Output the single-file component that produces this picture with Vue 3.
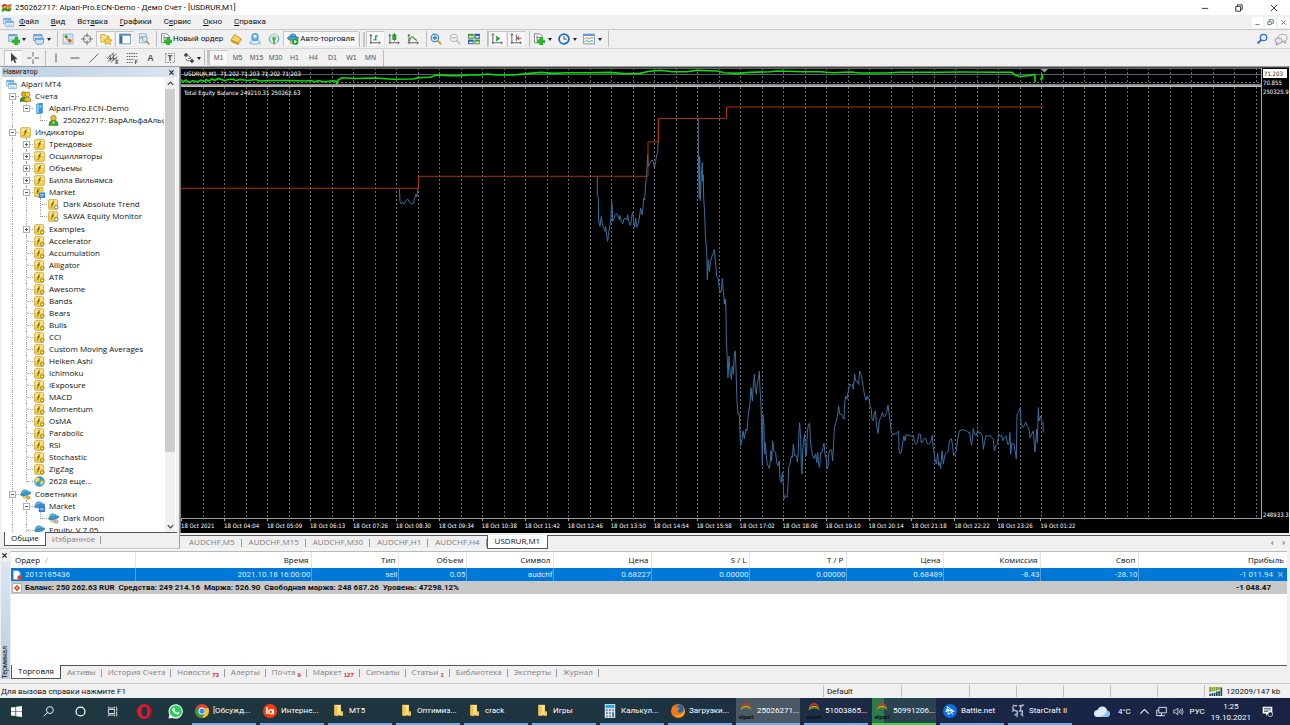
<script setup>
const icons = {
  logo: '<path d="M1 5q4-4 7-1t7-2v3q-4 3-7 1T1 8z" fill="#e23b2e"/><path d="M1 8q4-4 7-2t7-1v3q-4 3-7 1t-7 1z" fill="#f3b51d"/><path d="M1 11q4-4 7-2t7-1v4q-4 3-7 1t-7 2z" fill="#3d9a3a"/><path d="M4 4l-1 10M8 4l-1 9M12 3l-1 10" stroke="#7c2d12" stroke-width=".6"/>',
  windows: '<path d="M1 2h10v8H1z" fill="#eaf5fd" stroke="#5b9bd0"/><path d="M1 2h10v2.500H1z" fill="#63a9de"/><path d="M4 6h11v8H4z" fill="#fff" stroke="#5b9bd0"/><path d="M4 6h11v2.500H4z" fill="#63a9de"/><path d="M6 10.500h7M6 12.300h7" stroke="#8fc0e5"/>',
  newchart: '<path d="M1 2h11v9H1z" fill="#e9f3fb" stroke="#5486b5"/><path d="M1 2h11v2.500H1z" fill="#6fa6d4"/><path d="M3 9l2-2 2 2" stroke="#5486b5" fill="none"/><path d="M9 6h4v3.500h3.500v3.500H13V16H9v-3H5.500V9.500H9z" fill="#1fc41f" stroke="#0b7a0b" stroke-width=".6"/>',
  profiles: '<path d="M1 2h11v8H1z" fill="#eaf3fb" stroke="#4f86bb"/><path d="M1 2h11v2.500H1z" fill="#6fa6d4"/><path d="M3 7h11v6l-2 2H5l-2-2z" fill="#c9e0f3" stroke="#4f86bb"/><path d="M3 7h11v2H3z" fill="#5d9ad0"/>',
  watch: '<path d="M1.500 1.500h13v13h-13z" fill="#eef7fd" stroke="#69a3cf"/><path d="M9 4h4M9 6h4M3 11h4M3 13h4" stroke="#9cc7e6"/><circle cx="5.500" cy="5" r="2.200" fill="#22a53a"/><path d="M5 8l3-2 3 3-3 2z" fill="#f0a070"/><circle cx="10.500" cy="10.500" r="2.400" fill="#ea4a24"/>',
  cross: '<circle cx="8" cy="8" r="5" fill="none" stroke="#6b6b6b" stroke-width="1.200"/><path d="M8 0v6M8 10v6M0 8h6M10 8h6" stroke="#6b6b6b" stroke-width="1.200"/>',
  favs: '<path d="M1 2h5l1.500 2H12v8H1z" fill="#fbe28b" stroke="#c4922a"/><path d="M10.500 5.500l1.700 3.300 3.800.5-2.800 2.500.8 3.700-3.500-1.800L7 15.500l.7-3.700L5 9.300l3.700-.5z" fill="#ffd638" stroke="#b58412" stroke-width=".8"/>',
  nav: '<path d="M.5 1.500h15v13H.5z" fill="#fff" stroke="#3f7ec0"/><path d="M.5 1.500h15v2H.5z" fill="#3f7ec0"/><path d="M1 3.500h3.500V14H1z" fill="#2f6fb6"/>',
  tester: '<path d="M2 1h9v12H2z" fill="#e7f1fa" stroke="#78a3c8"/><path d="M3 8l2-4 2 5 2-5" stroke="#4b79a2" fill="none"/><circle cx="9" cy="8" r="3.500" fill="#d8ebf9" fill-opacity=".8" stroke="#7d97ab"/><path d="M11.500 11l3.500 4" stroke="#b98d2d" stroke-width="2"/>',
  order: '<path d="M2 1h7l3 3v9H2z" fill="#fff" stroke="#666"/><path d="M4 4h3M4 6h6M4 8h4" stroke="#777"/><path d="M9 6h4v3.500h3.500v3.500H13V16H9v-3H5.500V9.500H9z" fill="#1fc41f" stroke="#0b7a0b" stroke-width=".6"/>',
  book: '<path d="M6 2l9 6-4 5.500-9.500-4z" fill="#fad25e" stroke="#b37d12"/><path d="M1.500 9.500l9.500 4v2L2 11.700z" fill="#e2a22a" stroke="#a8700c" stroke-width=".6"/><path d="M11 13.500l4-5.500v2l-4 5.500z" fill="#fff3c5" stroke="#a8700c" stroke-width=".5"/>',
  person: '<rect x="4" y="1" width="8" height="9" rx="2.500" fill="#5cb3ee" stroke="#2b74b4"/><rect x="6" y="2.500" width="4" height="4" fill="#d8effc"/><path d="M1 14q0-4 4-4h6q4 0 4 4-7 2-14 0z" fill="#dff0fb" stroke="#5e97c3"/>',
  signal: '<circle cx="8" cy="8" r="6.500" fill="#dfe9e4" stroke="#9cb8ae"/><path d="M3.500 12a6 6 0 0 1 0-8M12.500 12a6 6 0 0 0 0-8" fill="none" stroke="#6ab0dc" stroke-width="1.400"/><circle cx="8" cy="7" r="2.500" fill="#5fb763"/><path d="M8 8v7" stroke="#379c3f" stroke-width="2"/>',
  auto: '<path d="M4 9h5v4q-4 3-5-1z" fill="#f6cf65" stroke="#b5872b"/><path d="M4 6q0-5 4-5t4 5z" fill="#66b7e6" stroke="#256c9e"/><ellipse cx="8" cy="7" rx="7.500" ry="2.600" fill="#4c9ed4" stroke="#256c9e"/><circle cx="11" cy="11.500" r="4.300" fill="#16a52b"/><path d="M9.700 9l3.800 2.500-3.800 2.500z" fill="#fff"/>',
  bars: '<path d="M2.500 2v12.500M1 13h14M1 4l1.500-2L4 4M13 11.500l2 1.500-2 1.500" fill="none" stroke="#555" stroke-width="1.200"/><path d="M9 3v7M9 4h3M6 9h3" stroke="#18952b" stroke-width="1.600"/>',
  candle: '<path d="M2.500 2v12.500M1 13h14M1 4l1.500-2L4 4M13 11.500l2 1.500-2 1.500" fill="none" stroke="#555" stroke-width="1.200"/><path d="M8.500 0v11" stroke="#0d7d1d"/><rect x="6.500" y="2.500" width="4" height="6" fill="#25b33c" stroke="#0d7d1d"/>',
  line: '<path d="M2.500 2v12.500M1 13h14M1 4l1.500-2L4 4M13 11.500l2 1.500-2 1.500" fill="none" stroke="#555" stroke-width="1.200"/><path d="M3 11q3-9 6-4l4 3" fill="none" stroke="#18952b" stroke-width="1.400"/>',
  zoomin: '<path d="M10 10l5 5" stroke="#d8a628" stroke-width="3"/><circle cx="6.500" cy="6.500" r="5" fill="#d6ecfa" stroke="#3b86c4" stroke-width="1.500"/><path d="M3.500 6.500h6M6.500 3.500v6" stroke="#1f6fb4" stroke-width="1.500"/>',
  zoomout: '<path d="M10 10l5 5" stroke="#c8c8c8" stroke-width="2.500"/><circle cx="6.500" cy="6.500" r="5" fill="#f3f3f3" stroke="#b4b4b4" stroke-width="1.300"/><path d="M3.500 6.500h6" stroke="#a4a4a4" stroke-width="1.400"/>',
  tile: '<path d="M0 1h7.500v6.500H0zM8.500 8.500H16V15H8.500z" fill="#4f9f2d"/><path d="M8.500 1H16v6.500H8.500zM0 8.500h7.500V15H0z" fill="#2c62b0"/><path d="M1.500 4h5v2h-5zM10 4h5v2h-5zM1.500 11.500h5v2h-5zM10 11.500h5v2h-5z" fill="#e9f3e6"/>',
  scroll: '<path d="M2.500 1v13.500M1 13h14M1 3l1.500-2L4 3M13 11.500l2 1.500-2 1.500" fill="none" stroke="#555" stroke-width="1.200"/><path d="M7 4l5 3.500L7 11z" fill="#25b33c" stroke="#0d7d1d" stroke-width=".5"/>',
  shift: '<path d="M2.500 1v13.500M1 13h14M1 3l1.500-2L4 3M13 11.500l2 1.500-2 1.500" fill="none" stroke="#555" stroke-width="1.200"/><path d="M8.500 2v9" stroke="#3474b2" stroke-width="1.300"/><path d="M15 7H9.500M12 4.500L9.500 7 12 9.500" stroke="#d44a1c" stroke-width="1.400" fill="none"/>',
  clock: '<circle cx="8" cy="8" r="6.500" fill="#f2f8fd" stroke="#1f69b8" stroke-width="2.400"/><path d="M8 4v4.200h3.500" stroke="#333" fill="none" stroke-width="1.200"/>',
  tmpl: '<path d="M.5 1.500h15v13H.5z" fill="#f4fafe" stroke="#4d86b8"/><path d="M.5 1.500h15V4H.5z" fill="#5d9ad0"/><path d="M2 8l3-2 3 2 3-2 3 1" stroke="#c7502a" fill="none"/><path d="M2 12l3-2 3 2 3-2 3 1" stroke="#2f9c2f" fill="none"/>',
  pointer: '<path d="M4 1v12l3-2.600 2 4.600 2-1-2-4.300h4z" fill="#444"/>',
  plus: '<path d="M8 0v6M8 10v6M0 8h6M10 8h6" stroke="#555" stroke-width="1.200"/>',
  vline: '<path d="M8 2v12" stroke="#555" stroke-width="1.300"/>',
  hline: '<path d="M2 8h12" stroke="#555" stroke-width="1.300"/>',
  trend: '<path d="M2 14L14 2" stroke="#555" stroke-width="1.200"/>',
  channel: '<path d="M0 9L9 1M1 13L13 2M5 14l9-8M4 4l1 8M8 2l1 9M2 9h11" stroke="#444" fill="none"/><path d="M15.500 11H12v5h3.500M12 13.500h3" stroke="#333" fill="none"/>',
  fibo: '<path d="M1 2h14M1 6h14M1 10h10M1 14h9" stroke="#555" stroke-width="1.200" stroke-dasharray="2 1"/><path d="M15.500 11H12.500v5M12.500 13.500h2.500" stroke="#333" fill="none"/>',
  frame: '<path d="M2 2h12v12H2z" stroke="#666" fill="none" stroke-dasharray="2 1.500"/><path d="M5 5h6M8 5v7" stroke="#333" stroke-width="1.500"/>',
  arrows: '<path d="M4 1l3 3-3 3-3-3zM12 9l3 3-3 3-3-3z" fill="#444"/><path d="M7 5l4 3-4 1M4 9l2 3 3-1" stroke="#444" fill="none"/>',
  mag: '<circle cx="10" cy="6" r="4.300" fill="#e6effb" stroke="#3b6fd0" stroke-width="1.700"/><path d="M7 9l-5 5" stroke="#3b6fd0" stroke-width="2.400"/>',
  chat: '<ellipse cx="10" cy="6" rx="5.500" ry="4.300" fill="#f4f4f4" stroke="#9a9a9a"/><ellipse cx="5" cy="9.500" rx="4.500" ry="3.500" fill="#e6e6e6" stroke="#8d8d8d"/><path d="M3 12l-1 3 4-2M13 9.500l1 3-4-2" fill="#e6e6e6" stroke="#8d8d8d"/>',
  people: '<circle cx="5.500" cy="4.500" r="3.500" fill="#e2b117" stroke="#8c6a07"/><path d="M0 15q0-6 5.500-6T11 15z" fill="#3a9c1c" stroke="#226a0d"/><circle cx="11" cy="5" r="3.500" fill="#f4c93d" stroke="#8c6a07"/><path d="M6 15q0-6 5-6t5 6z" fill="#f0c02a" stroke="#8c6a07"/>',
  server: '<path d="M4 1.500l8-1v14l-8 1z" fill="#2f9be8" stroke="#1a6fb5"/><path d="M4 1.500l3 1V15l-3-.5z" fill="#8ccaf5"/><path d="M8 4h3M8 6h3" stroke="#d8effc"/>',
  user: '<path d="M1.500 15q0-7.500 6.500-7.500T14.500 15z" fill="#38ad22" stroke="#1f7510"/><circle cx="8" cy="4.500" r="4" fill="#f0c02a" stroke="#8c6a07"/><path d="M8 9l-2 3h4z" fill="#fff"/>',
  f: '<rect x="1" y="1" width="14" height="14" rx="1.500" fill="#f8d44f" stroke="#bd9016"/><path d="M2 2h12v5H2z" fill="#fbe58e"/><path d="M10.500 4Q8.500 3 8 6l-1 5q-.4 1.500-2 1.300M6 7h4" stroke="#5a420a" stroke-width="1.200" fill="none"/>',
  fg: '<rect x="1" y="1" width="13" height="14" rx="1.500" fill="#f8d44f" stroke="#bd9016"/><path d="M2 2h11v5H2z" fill="#fbe58e"/><path d="M9 4Q7 3 6.500 6l-1 5q-.4 1-1.500 1M5 7h3.500" stroke="#5a420a" stroke-width="1.200" fill="none"/><circle cx="12" cy="12" r="2.600" fill="#f7c21f" stroke="#9a7210" stroke-width="1.200"/><circle cx="12" cy="12" r="1" fill="#fff"/>',
  fc: '<rect x="1" y="1" width="13" height="14" rx="1.500" fill="#f8d44f" stroke="#bd9016"/><path d="M2 2h11v5H2z" fill="#fbe58e"/><path d="M9 4Q7 3 6.500 6l-1 5q-.4 1-1.500 1M5 7h3.500" stroke="#5a420a" stroke-width="1.200" fill="none"/><circle cx="12" cy="12" r="2.600" fill="#ddd" stroke="#777" stroke-width="1.200"/><circle cx="12" cy="12" r="1" fill="#fff"/>',
  fm: '<rect x="0" y="0" width="13" height="14" rx="1.500" fill="#f8d44f" stroke="#bd9016"/><path d="M8 3Q6 2 5.500 5l-1 5M4 6h3.500" stroke="#5a420a" stroke-width="1.200" fill="none"/><rect x="7" y="8" width="9" height="8" fill="#2f87dc"/><path d="M9.500 8q2-3 4 0M9 11h5M9 13h5" stroke="#d8effc" fill="none"/>',
  globe: '<circle cx="8" cy="8" r="7" fill="#3aa0e6" stroke="#2a78b5"/><path d="M3 3q4-2 5 1t-2 4-3 3q-3-4 0-8zM10 7q4-1 4 1-1 5-4 5-2-3 0-6z" fill="#f2dc3a"/>',
  hat: '<path d="M4 9h5v4q-3 2-5-1z" fill="#f6cf65" stroke="#b5872b" stroke-width=".6"/><path d="M2 7Q2 1 7 1t6 5z" fill="#56b0e4" stroke="#2a7bb0" stroke-width=".7"/><path d="M0 8q6-4 15-4l1 2q-5 4-13 4z" fill="#3d97cf" stroke="#2a6f9f" stroke-width=".7"/><circle cx="12" cy="12.500" r="2.500" fill="#f7c21f" stroke="#9a7210"/>',
  hatm: '<path d="M2 7Q2 1 7 1t6 5z" fill="#56b0e4" stroke="#2a7bb0" stroke-width=".7"/><path d="M0 8q6-4 15-4l1 2q-5 4-13 4z" fill="#3d97cf" stroke="#2a6f9f" stroke-width=".7"/><rect x="7" y="7.500" width="9" height="8.500" fill="#2f77dc"/><path d="M9 11h5M9 13h5" stroke="#d8effc"/>',
  hatg: '<path d="M4 9h5v4q-3 2-5-1z" fill="#f6cf65" stroke="#b5872b" stroke-width=".6"/><path d="M2 7Q2 1 7 1t6 5z" fill="#56b0e4" stroke="#2a7bb0" stroke-width=".7"/><path d="M0 8q6-4 15-4l1 2q-5 4-13 4z" fill="#3d97cf" stroke="#2a6f9f" stroke-width=".7"/><circle cx="12" cy="12.500" r="2.500" fill="#ddd" stroke="#666"/>',
  sell: '<path d="M2 1h8l3 3v11H2z" fill="#fff" stroke="#999"/><circle cx="12" cy="12" r="3.500" fill="#e0431a"/>',
  sum: '<rect x="1" y="1" width="14" height="14" rx="1" fill="#fff" stroke="#8a8a8a"/><path d="M8 3l5 5-5 5-5-5z" fill="#cf3a12"/><path d="M8 6v4M6 8h4" stroke="#fff"/>',
  start: '<path d="M0 2.200l6.500-.9v6.200H0zM7.500 1.100L16 0v7.500H7.500zM0 8.500h6.500v6.200L0 13.800zM7.500 8.500H16V16l-8.500-1.100z" fill="#fff"/>',
  search: '<circle cx="10" cy="6" r="5" fill="none" stroke="#fff" stroke-width="1.300"/><path d="M6.500 9.500L1 15" stroke="#fff" stroke-width="1.300"/>',
  ring: '<circle cx="8" cy="8" r="6.500" fill="none" stroke="#fff" stroke-width="1.800"/>',
  taskview: '<path d="M2 5h9v6H2zM2 1v2h9V1M2 15v-2h9v2M14 1v3M14 8v7" fill="none" stroke="#fff" stroke-width="1.200"/><path d="M13 4.500h2v2h-2z" fill="#fff"/>',
  opera: '<path fill-rule="evenodd" d="M8 0a8 8 0 1 0 0 16A8 8 0 1 0 8 0zm0 2.300c2 0 3.300 2.400 3.300 5.700S10 13.700 8 13.700 4.700 11.300 4.700 8 6 2.300 8 2.300z" fill="#e3192c"/><path d="M8 0a8 8 0 0 1 0 16c4-1 6-4 6-8s-2-7-6-8z" fill="#a80d1e"/>',
  whatsapp: '<path d="M.5 15.500l1-4A7.600 7.600 0 1 1 5 14.800z" fill="#fff"/><circle cx="8.300" cy="7.700" r="6.500" fill="#25d05a"/><path d="M5.500 4q1.500-.5 2 1.800L7 7q.8 1.800 2.300 2.200l1-1q2 .6 1.900 1.300-.4 2-2.500 1.800Q5.600 10 4.600 6.500q0-1.800.9-2.500z" fill="#fff"/>',
  chrome: '<circle cx="8" cy="8" r="8" fill="#e2412f"/><path d="M1.100 4L8 16A8 8 0 0 1 1.100 4z" fill="#2f9c48"/><path d="M16 8a8 8 0 0 1-8 8l4-7V4.500h3.200A8 8 0 0 1 16 8z" fill="#fbc316"/><path d="M1.100 4l3.500 6L8 16l3.500-6z" fill="#2f9c48"/><circle cx="8" cy="8" r="4" fill="#fff"/><circle cx="8" cy="8" r="3" fill="#4285f4"/>',
  la: '<circle cx="8" cy="8" r="8" fill="#fa3c0a"/><path d="M4.500 3.500v8" stroke="#fff" stroke-width="1.800"/><circle cx="9" cy="8.800" r="2.200" fill="none" stroke="#fff" stroke-width="1.700"/><path d="M11.700 6v5.700" stroke="#fff" stroke-width="1.600"/>',
  folder: '<path d="M3 1h8v13H3z" fill="#ffe28a"/><path d="M10 9h3.500v5.500H10z" fill="#f6cb58"/><path d="M3 1l4 2.500V15l-4-1z" fill="#f3c44b"/>',
  calc: '<path d="M2 0h12v16H2z" fill="#d9e4ec"/><path d="M3 1h10v3.500H3z" fill="#2aa8e0"/><path d="M3.500 6h2v2h-2zM7 6h2v2H7zM10.500 6h2v2h-2zM3.500 9.500h2v2h-2zM7 9.500h2v2H7zM3.500 13h2v2h-2zM7 13h2v2H7z" fill="#607c90"/><path d="M10.500 9.500h2V15h-2z" fill="#2879b0"/>',
  firefox: '<circle cx="8" cy="8" r="8" fill="#f27a1a"/><circle cx="9" cy="6.500" r="5.500" fill="#1d66b8"/><path d="M1 3q2 1 4 0Q7 1.500 9 2 7 3 7.500 4.500l3 .5-3 2.500q0 3 3 2.500 2-.5 3.500-2-1 5-6 5-6-1-7-10z" fill="#f27a1a"/><path d="M13.500 3q3 4 0 8-4 4-9 1 4 5 9 1.500Q18 9 13.500 3z" fill="#fcc51f"/>',
  alpari: '<path d="M0 8Q2 0 8 0t8 8l-1-1Q13 3 8 3T1 8z" fill="#c43a24"/><path d="M0 10q2-6 8-6t8 6l-1-1q-3-3-7-3T1 10z" fill="#d9a420"/><path d="M0 11q2-5 8-5t8 5q-4-3-8-3t-8 3z" fill="#3e8c30"/>',
  bnet: '<circle cx="8" cy="8" r="8" fill="#0b6fe8"/><path d="M5 3l7 5-6 4zM4 9q-1-4 2-3 4 2 5 6M3 8.500q6-3 10 0" fill="none" stroke="#fff" stroke-width="1.100"/>',
  sc: '<path d="M7 2Q2 1 2 4t4 4-2 5M9 2h5M11 2v5M9 8h4v4M7 10v5M1 8h2M14 14l-3-3" fill="none" stroke="#a9bdd0" stroke-width="1.500"/><path d="M2 1l3 1M12 1h3" stroke="#e3c56a"/>',
  cloud: '<path d="M3.500 13a3.500 3.500 0 0 1 0-7Q5 2 9 2.500q3.500.5 4 4a3.300 3.300 0 0 1 0 6.500z" fill="#d9ecfa"/><path d="M5 13q6-1 8-6.500a3.300 3.300 0 0 1 0 6.500z" fill="#8cc4ee"/>',
  up: '<path d="M2 11l6-6 6 6" fill="none" stroke="#fff" stroke-width="1.600"/>',
  net: '<path d="M4 2h11v8H4zM1 6h3M1 6v8h7v-4M5 14h8" fill="none" stroke="#fff" stroke-width="1.200"/>',
  sound: '<path d="M1 6h3l3-3v10l-3-3H1z" fill="none" stroke="#fff"/><path d="M9 6q1 2 0 4M11 4.500q2 3.500 0 7M13 3q3 5 0 10" fill="none" stroke="#fff"/>',
  notify: '<path d="M1 1h14v10H9l-3 3v-3H1z" fill="#fff"/><path d="M3 3.500h10M3 5.800h10M3 8h6" stroke="#1d2b48"/><circle cx="12" cy="12" r="3.500" fill="#1d2b48" stroke="#fff"/>',
  traffic: '<path d="M0 0h3v9H0zM4 0h3v8H4zM8 0h3v7H8zM12 0h3v6h-3zM16 0h3v5h-3zM20 0h3v4h-3z" fill="#7c9a2a"/><path d="M0 12h3v4H0zM4 11h3v5H4zM8 10h3v6H8zM12 8h3v8h-3zM16 7h3v9h-3zM20 2h3v14h-3z" fill="#1c4c5c"/>',
}

const menu = [['', 'Ф', 'айл'], ['', 'В', 'ид'], ['Вст', 'а', 'вка'], ['', 'Г', 'рафики'], ['С', 'е', 'рвис'], ['', 'О', 'кно'], ['', 'С', 'правка']]

const tools = [
  { i: 'newchart', t: 'Новый график', drop: 1 }, { i: 'profiles', t: 'Профили', drop: 1 }, { sep: 1 },
  { i: 'watch', t: 'Обзор рынка' }, { i: 'cross', t: 'Окно данных' }, { i: 'favs', t: 'Избранное', on: 1 }, { i: 'nav', t: 'Навигатор', on: 1 }, { i: 'tester', t: 'Тестер' }, { sep: 1 },
  { i: 'order', label: 'Новый ордер' }, { i: 'book', t: 'Редактор' }, { i: 'person', t: 'Сообщество' }, { i: 'signal', t: 'Сигналы' },
  { i: 'auto', label: 'Авто-торговля', on: 1 }, { grip: 1 },
  { i: 'bars', t: 'Бары', on: 1 }, { i: 'candle', t: 'Свечи' }, { i: 'line', t: 'Линия' }, { sep: 1 },
  { i: 'zoomin', t: 'Увеличить' }, { i: 'zoomout', t: 'Уменьшить' }, { i: 'tile', t: 'Мозаика' }, { sep: 1 },
  { i: 'scroll', t: 'Автопрокрутка', on: 1 }, { i: 'shift', t: 'Сдвиг', on: 1 }, { sep: 1 },
  { i: 'order', t: 'Индикаторы', drop: 1 }, { i: 'clock', t: 'Периоды', drop: 1 }, { i: 'tmpl', t: 'Шаблоны', drop: 1 }, { sep: 1 },
]
const drawTools = [
  { i: 'pointer', t: 'Курсор', on: 1 }, { i: 'plus', t: 'Перекрестие' }, { sep: 1 }, { i: 'vline', t: 'Вертикаль' }, { i: 'hline', t: 'Горизонталь' },
  { i: 'trend', t: 'Тренд' }, { i: 'channel', t: 'Канал' }, { i: 'fibo', t: 'Фибоначчи' }, { tf: 'A' }, { i: 'frame', t: 'Метка' }, { i: 'arrows', t: 'Стрелки', drop: 1 },
  { grip: 1 },
  ...['M1', 'M5', 'M15', 'M30', 'H1', 'H4', 'D1', 'W1', 'MN'].map((tf, n) => ({ tf, on: n === 0 })), { sep: 1 },
]

const leaf = (n) => ({ d: 2, i: 'fg', n })
const tree = [
  { d: 0, i: 'windows', n: 'Alpari MT4' },
  { d: 1, i: 'people', n: 'Счета', b: '-' },
  { d: 2, i: 'server', n: 'Alpari-Pro.ECN-Demo', b: '-', last: 1 },
  { d: 3, i: 'user', n: '250262717: ВарАльфаАльфа', last: 1, gap: 1 },
  { d: 1, i: 'f', n: 'Индикаторы', b: '-' },
  { d: 2, i: 'f', n: 'Трендовые', b: '+' }, { d: 2, i: 'f', n: 'Осцилляторы', b: '+' }, { d: 2, i: 'f', n: 'Объемы', b: '+' }, { d: 2, i: 'f', n: 'Билла Вильямса', b: '+' },
  { d: 2, i: 'fm', n: 'Market', b: '-' },
  { d: 3, i: 'fc', n: 'Dark Absolute Trend' }, { d: 3, i: 'fc', n: 'SAWA Equity Monitor', last: 1 },
  { d: 2, i: 'fg', n: 'Examples', b: '+', space: 1 },
  ...['Accelerator', 'Accumulation', 'Alligator', 'ATR', 'Awesome', 'Bands', 'Bears', 'Bulls', 'CCI', 'Custom Moving Averages', 'Heiken Ashi', 'Ichimoku', 'iExposure', 'MACD', 'Momentum', 'OsMA', 'Parabolic', 'RSI', 'Stochastic', 'ZigZag'].map(leaf),
  { d: 2, i: 'globe', n: '2628 еще...', last: 1 },
  { d: 1, i: 'hat', n: 'Советники', b: '-', space: 1 },
  { d: 2, i: 'hatm', n: 'Market', b: '-' }, { d: 3, i: 'hatg', n: 'Dark Moon', last: 1 }, { d: 2, i: 'hat', n: 'Equity_V 7.05' },
]

const grid = Array.from({ length: 50 }, (_, n) => 203.4 + n * 21.49)
const times = ['18 Oct 2021', '18 Oct 04:04', '18 Oct 05:09', '18 Oct 06:13', '18 Oct 07:26', '18 Oct 08:30', '18 Oct 09:34', '18 Oct 10:38', '18 Oct 11:42', '18 Oct 12:46', '18 Oct 13:50', '18 Oct 14:54', '18 Oct 15:58', '18 Oct 17:02', '18 Oct 18:06', '18 Oct 19:10', '18 Oct 20:14', '18 Oct 21:18', '18 Oct 22:22', '18 Oct 23:26', '19 Oct 01:22']

const dip = '658,370 660,410 663,417 668,412 672,418 678,408 683,403 688,412 695,418 700,416 704,400 708,388 711,396 713,375 716,365'
const climb = '22,333 22,395 25,398 26,470 30,485 34,455 37,478 42,492 45,500 47,485 50,515 53,530 56,505 60,480 63,460 65,410 67,430 68,470 72,462 74,452 80,447 85,458 88,465 90,452 94,470 98,478 102,462 107,460 111,466 113,450 118,478 122,482 125,455 128,443 131,470 134,488 137,460 140,488 144,478 148,460 152,430 156,450 159,430 161,400 164,405 166,370 170,330 173,270 175,305 180,295 186,285 190,292 193,308 197,290 200,268 203,265 205,210 205,160'
const fall = '325,160 325,225 326,330 328,400 329,275 331,408 334,330 337,293 338,350 340,330 341,400 344,445 346,510 350,560 352,645 355,585 358,620 362,590 366,575 370,565 373,555 377,600 380,635 384,640 387,665 391,685 394,680 397,642 400,680 403,718'
const range = '103,13 104,0 106,16 107,0 108,40 109,120 112,180 114,235 117,170 120,215 124,240 127,200 130,225 133,160 136,155 139,240 141,305 144,345 148,345 150,400 152,440 156,420 159,395 163,418 168,390 171,395 175,345 180,310 183,265 187,305 190,260 193,225 196,265 199,285 202,250 206,235 208,215 210,270 213,315 215,400 217,500 219,345 222,380 223,450 225,465 226,430 229,470 232,495 238,508 241,485 243,455 245,485 248,425 252,455 257,460 260,490 264,500 268,485 270,540 274,550 277,520 280,560 282,600 286,590 291,595 294,560 296,505 300,495 304,470 307,475 310,435 314,470 320,470 322,488 325,455 327,400 329,370 332,420 334,500 336,525 338,460 340,430 344,405 347,470 349,470 352,400 355,378 359,372 361,420 364,450 368,470 372,478 377,465 380,490 383,460 386,495 389,505 392,460 396,460 399,445 402,432 405,465 409,480 411,510 414,505 417,460 421,450 425,455 428,485 431,430 433,385 438,370 442,350 446,320 449,345 454,345 458,352 462,360 464,310 467,290 471,300 475,275 479,255 484,258 487,255 490,270 494,225 497,245 502,245 506,255 509,215 513,225 516,240 520,265 524,290 528,303 531,290 534,300 537,297 540,320 544,330 546,360 550,365 553,340 556,335 560,380 564,403 568,365 572,355 577,340 581,352 586,350 590,340 594,318 598,350 601,370 604,400 609,408 614,402 619,405 622,400 626,395 627,450 629,463 634,460 638,430 642,410 645,425 649,405 655,410 661,408 666,412 670,410 674,430 678,435 682,430 686,405 691,405 694,432 699,425 703,418 707,418 711,432 716,435 722,430 727,408 730,450 732,460 735,480 739,495 743,462 746,500 749,490 752,508 756,455 760,495 764,468 769,460 774,458 779,425 784,418 788,440 791,470 796,460 799,455 803,420 808,395 815,392 822,392 829,395 834,400 839,398 842,425 845,438 848,410 850,388 854,405 859,408 863,393 867,402 872,400 877,410 880,450 884,425 889,408 895,412 900,408 905,415 910,420 913,455 917,440 922,435 926,405 930,412 935,408 938,425 943,415 948,410 953,435 957,435 960,400 962,465 966,432 972,435 975,455 979,480 981,345 985,340 991,325 993,370 998,385 1003,380 1007,368 1011,380 1016,385 1020,415 1025,405 1030,395 1033,440 1035,458 1040,390 1042,430 1045,325 1047,365 1052,350 1056,370 1059,370 1060,395 1062,400'
const price = '181,79.500 183,82 186,80 189,82.500 193,80.500 197,82 201,80 205,81.500 206,79.500 209,81 212,79 215,80.500 218,78.500 224,80.500 232,79 236,80.500 240,79.500 248,80.500 256,79.500 259,81 270,80.500 290,80.500 305,81 311,80.500 315,82 318,80.500 325,82 333,80.500 336,81.500 337,84 338,80 342,77.700 355,78.500 375,78 393,79.200 413,79 419,77.600 430,77.300 437,75 450,75.600 460,75.700 470,75 480,75 487,74 497,75 513,75 527,73.600 541,72.400 553,73.400 567,72.700 590,72.700 610,72.400 625,73.800 640,73.400 648,71.500 660,70.300 672,71.700 687,71.700 697,70.300 717,71 724,72.700 737,73.400 750,72.400 770,71.700 777,71 803,71.700 820,71.700 833,72.700 850,72 860,73 885,73 900,72.300 940,72.300 963,72 997,72.300 1012,72.300 1015,75 1020,76.500 1030,75.500 1034,74.500 1035,76 1035,82'

const chartTabs = ['AUDCHF,M5', 'AUDCHF,M15', 'AUDCHF,M30', 'AUDCHF,H1', 'AUDCHF,H4']
const cols = [['Ордер', 125], ['Время', 176], ['Тип', 87], ['Объем', 68], ['Символ', 87], ['Цена', 98], ['S / L', 98], ['T / P', 97], ['Цена', 97], ['Комиссия', 97], ['Своп', 98], ['Прибыль', 148]]
const colWidth = (w) => (w / 1276) * 100 + '%'
const order = ['2021.10.18 16:00:00', 'sell', '0.05', 'audchf', '0.68227', '0.00000', '0.00000', '0.68489', '-8.43', '-28.10']
const termTabs = [['Активы'], ['История Счета'], ['Новости', 73], ['Алерты'], ['Почта', 9], ['Маркет', 127], ['Сигналы'], ['Статьи', 1], ['Библиотека'], ['Эксперты'], ['Журнал']]
const quick = [['start', 'Пуск'], ['search', 'Поиск'], ['ring', 'Cortana'], ['taskview', 'Представление задач'], ['opera', 'Opera'], ['whatsapp', 'WhatsApp']]
const tasks = [['chrome', '[Обсужд...'], ['la', 'Интерне...'], ['folder', 'MT5'], ['folder', 'Оптимиз...'], ['folder', 'crack'], ['folder', 'Игры'], ['calc', 'Калькул...'], ['firefox', 'Загрузки...'], ['alpari', '25026271...', 'active'], ['alpari', '51003865...'], ['alpari', '50991206...', 'progress'], ['bnet', 'Battle.net'], ['sc', 'StarCraft II']]
</script>

<template>
  <div class="screen">
    <header class="title">
      <svg class="ic" viewBox="0 0 16 16" v-html="icons.logo"></svg>
      <span class="grow">250262717: Alpari-Pro.ECN-Demo - Демо Счет - [USDRUR,M1]</span>
      <button class="win" aria-label="Свернуть"><svg viewBox="0 0 10 10"><path d="M1 5.500h8" /></svg></button>
      <button class="win" aria-label="Восстановить"><svg viewBox="0 0 10 10"><path d="M1 3h6v6H1zM3 3V1h6v6H7" /></svg></button>
      <button class="win" aria-label="Закрыть"><svg viewBox="0 0 10 10"><path d="M1 1l8 8M9 1l-8 8" /></svg></button>
    </header>

    <nav class="menu">
      <svg class="ic" viewBox="0 0 16 16" v-html="icons.windows"></svg>
      <button v-for="m in menu" :key="m[1] + m[2]">{{ m[0] }}<u>{{ m[1] }}</u>{{ m[2] }}</button>
      <span class="grow"></span>
      <button class="mdi" aria-label="Свернуть окно"><svg viewBox="0 0 10 10"><path d="M2 8h6" /></svg></button>
      <button class="mdi" aria-label="Восстановить окно"><svg viewBox="0 0 10 10"><path d="M1 4h5v4H1zM3 4V1h6v5H6" /></svg></button>
      <button class="mdi" aria-label="Закрыть окно"><svg viewBox="0 0 10 10"><path d="M2 2l6 6M8 2L2 8" /></svg></button>
    </nav>

    <div class="bar">
      <template v-for="(t, n) in tools" :key="n">
        <i v-if="t.sep" class="sep"></i>
        <i v-else-if="t.grip" class="grip"></i>
        <button v-else class="tool" :class="{ on: t.on, drop: t.drop, wide: t.label }" :aria-label="t.t">
          <svg class="ic" viewBox="0 0 16 16" v-html="icons[t.i]"></svg><span v-if="t.label">{{ t.label }}</span>
        </button>
      </template>
      <span class="grow"></span>
      <button class="tool" aria-label="Поиск"><svg class="ic" viewBox="0 0 16 16" v-html="icons.mag"></svg></button>
      <button class="tool" aria-label="Чат"><svg class="ic chat" viewBox="0 0 16 16" v-html="icons.chat"></svg></button>
    </div>
    <div class="bar second">
      <template v-for="(t, n) in drawTools" :key="n">
        <i v-if="t.sep" class="sep"></i>
        <i v-else-if="t.grip" class="grip"></i>
        <button v-else-if="t.tf" class="tool tf" :class="{ on: t.on, letter: t.tf === 'A' }">{{ t.tf }}</button>
        <button v-else class="tool" :class="{ on: t.on, drop: t.drop }" :aria-label="t.t">
          <svg class="ic" viewBox="0 0 16 16" v-html="icons[t.i]"></svg>
        </button>
      </template>
    </div>

    <main class="main">
      <aside class="navigator">
        <div class="navhead"><span class="grow">Навигатор</span><button class="close" aria-label="Закрыть навигатор"><svg viewBox="0 0 10 10"><path d="M2 2l6 6M8 2L2 8" /></svg></button></div>
        <div class="treebox">
          <ul class="tree">
            <li v-for="(r, n) in tree" :key="n" :class="{ space: r.space }">
              <i v-for="c in r.d" :key="c" class="cell" :class="{ tee: c === r.d, line: c < r.d && !(r.gap && c === 2), last: c === r.d && r.last, first: n === 1 }">
                <b v-if="c === r.d && r.b" :class="{ plus: r.b === '+' }"></b>
              </i>
              <svg class="ic" viewBox="0 0 16 16" v-html="icons[r.i]"></svg>
              <span>{{ r.n }}</span>
            </li>
          </ul>
          <div class="scroll">
            <button aria-label="Вверх"><svg viewBox="0 0 10 10"><path d="M2 6.500l3-3 3 3" /></svg></button>
            <i class="thumb"></i>
            <button aria-label="Вниз"><svg viewBox="0 0 10 10"><path d="M2 3.500l3 3 3-3" /></svg></button>
          </div>
        </div>
        <div class="tabs navtabs"><button class="tab sel">Общие</button><button class="tab">Избранное</button></div>
      </aside>

      <section class="work">
        <div class="chart">
          <div class="upper">
            <div class="plots">
              <div class="pane price">
                <svg viewBox="181 68 1080 16" preserveAspectRatio="none">
                  <path class="grid" v-for="x in grid" :key="x" :d="`M${x} 68V84`" />
                  <path class="grid" d="M181 82.500H1261" />
                  <path class="edge" d="M181 68.500H1261" />
                  <path class="bid" d="M181 74.500H1261" />
                  <polyline class="green" :points="price" />
                  <polyline class="green" points="1040,79 1042,79 1042.500,74" />
                  <path d="M1041 69h7l-3.500 3.500z" fill="#8ba0b4" />
                </svg>
                <span class="cap">USDRUR,M1&nbsp; 71.202 71.203 71.202 71.203</span>
              </div>
              <i class="splitter"></i>
              <div class="pane equity">
                <svg viewBox="181 87 1080 432" preserveAspectRatio="none">
                  <path class="grid" v-for="x in grid" :key="x" :d="`M${x} 87V519`" />
                  <polyline class="blue" transform="translate(180 65) scale(.33333)" :points="dip" />
                  <g transform="translate(590 65) scale(.33333)"><polyline class="blue" :points="climb" /><polyline class="blue" :points="fall" /></g>
                  <polyline class="blue" transform="translate(690 300) scale(.33333)" :points="range" />
                  <path class="red" d="M181 188.500H418.500V176.500H648V142H658.500V118.500H726.500V107H1043" />
                </svg>
                <span class="cap">Total Equity Balance 249210.31 250262.63</span>
              </div>
            </div>
            <div class="axis">
              <span class="bidlabel">71.203</span><span>70.855</span><span>250325.9</span><i class="grow"></i><span>248933.3</span>
            </div>
          </div>
          <div class="times"><span v-for="t in times" :key="t">{{ t }}</span></div>
        </div>
        <div class="tabs charttabs">
          <button v-for="t in chartTabs" :key="t" class="tab">{{ t }}</button><button class="tab sel">USDRUR,M1</button>
          <span class="grow"></span>
          <button class="arrow" aria-label="Назад"><svg viewBox="0 0 10 10"><path d="M7 1v8L3 5z" /></svg></button>
          <button class="arrow" aria-label="Вперед"><svg viewBox="0 0 10 10"><path d="M3 1v8l4-4z" /></svg></button>
        </div>
      </section>
    </main>

    <section class="terminal">
      <div class="strip"><button class="close" aria-label="Закрыть терминал"><svg viewBox="0 0 10 10"><path d="M2 2l6 6M8 2L2 8" /></svg></button><div class="side"><span>Терминал</span></div></div>
      <div class="termbody">
        <table>
          <colgroup><col v-for="(c, n) in cols" :key="n" :style="{ width: colWidth(c[1]) }" /></colgroup>
          <thead><tr><th v-for="(c, n) in cols" :key="n">{{ c[0] }}<small v-if="n === 0">&nbsp; &nbsp;/</small></th></tr></thead>
          <tbody>
            <tr class="pos">
              <td><span class="cellrow"><svg class="ic" viewBox="0 0 16 16" v-html="icons.sell"></svg>2012185436</span></td>
              <td v-for="(v, n) in order" :key="n">{{ v }}</td>
              <td><span class="cellrow end">-1 011.94<button class="close" aria-label="Закрыть ордер"><svg viewBox="0 0 10 10"><path d="M2 2l6 6M8 2L2 8" /></svg></button></span></td>
            </tr>
            <tr class="sum">
              <td colspan="11"><span class="cellrow"><svg class="ic" viewBox="0 0 16 16" v-html="icons.sum"></svg>Баланс: 250 262.63 RUR&nbsp; Средства: 249 214.16&nbsp; Маржа: 526.90&nbsp; Свободная маржа: 248 687.26&nbsp; Уровень: 47298.12%</span></td>
              <td>-1 048.47</td>
            </tr>
          </tbody>
        </table>
        <div class="blank"></div>
        <div class="tabs termtabs">
          <button class="tab sel">Торговля</button>
          <button v-for="t in termTabs" :key="t[0]" class="tab">{{ t[0] }}<em v-if="t[1]">{{ t[1] }}</em></button>
        </div>
      </div>
    </section>

    <footer class="status">
      <span class="grow">Для вызова справки нажмите F1</span>
      <span class="s1">Default</span><i class="s2"></i><i class="s3"></i><i class="s3"></i><i class="s3"></i><i class="s3"></i><i class="s3"></i>
      <span class="s4"><svg viewBox="0 0 24 16" v-html="icons.traffic"></svg>120209/147 kb</span>
    </footer>

    <div class="taskbar">
      <button v-for="q in quick" :key="q[0]" class="quick" :class="q[0]" :aria-label="q[1]"><svg viewBox="0 0 16 16" v-html="icons[q[0]]"></svg></button>
      <button v-for="t in tasks" :key="t[1]" class="task" :class="[t[2], t[0]]">
        <span class="pic"><svg viewBox="0 0 16 16" v-html="icons[t[0]]"></svg><small v-if="t[0] === 'alpari'">alpari</small></span>{{ t[1] }}
      </button>
      <span class="grow"></span>
      <div class="tray">
        <svg class="cloud" viewBox="0 0 16 16" v-html="icons.cloud"></svg><span class="temp">4°C</span>
        <svg viewBox="0 0 16 16" v-html="icons.up"></svg><svg viewBox="0 0 16 16" v-html="icons.net"></svg><svg viewBox="0 0 16 16" v-html="icons.sound"></svg>
        <span class="lang">РУС</span><time>1:25<br />19.10.2021</time>
        <svg class="note" viewBox="0 0 16 16" v-html="icons.notify"></svg>
      </div>
    </div>
  </div>
</template>

<style>
body { margin: 0; background: #f0f0f0; }
</style>

<style scoped>
.screen { display: flex; flex-direction: column; min-height: 100vh; overflow: hidden; background: #f0f0f0; color: #111; font: 8px/12px Roboto, "Noto Sans", sans-serif; white-space: nowrap; }
.tree, .tabs, thead { font-family: "Open Sans", "Noto Sans", sans-serif; }
* { box-sizing: border-box; }
button { margin: 0; padding: 0; border: 0; background: none; color: inherit; font: inherit; white-space: nowrap; }
svg { display: block; flex: none; }
i { font-style: normal; }
.grow { flex: 1; }
.ic { width: 11px; height: 11px; }
.bar .ic { width: 12px; height: 12px; }
.title { display: flex; align-items: center; gap: 3px; height: 15px; padding-left: 1px; background: #fff; }
.win { display: grid; place-items: center; width: 31px; height: 15px; }
.win:last-child { width: 33px; }
.win svg { width: 8px; height: 8px; fill: none; stroke: #111; }
.menu { display: flex; align-items: center; height: 14px; padding: 0 1px 0 3px; }
.menu > button { margin-left: 12px; }
.menu > .ic + button { margin-left: 5px; }
.menu u { text-underline-offset: 1px; text-decoration-thickness: 1px; }
.menu > .mdi { display: grid; place-items: center; width: 11px; height: 11px; margin-left: 2px; background: #fff; }
.mdi svg { width: 7px; height: 7px; fill: none; stroke: #5a6f86; stroke-width: 1.3; }
.bar { display: flex; align-items: center; height: 19px; padding-left: 4px; border-top: 1px solid #c8c8c8; }
.bar.second { height: 18px; border-top-color: #d5d5d5; }
.tool { position: relative; display: flex; align-items: center; justify-content: center; width: 19px; height: 16px; }
.tool.on { background: #f8f8f8; border: 1px solid #c4c4c4; border-right-color: #e8e8e8; border-bottom-color: #e8e8e8; }
.tool.drop { width: 25px; padding-right: 6px; }
.tool.drop::after { content: ""; position: absolute; right: 3px; top: 7px; border: 2px solid transparent; border-top: 3px solid #222; border-bottom: 0; }
.tool.wide { width: auto; gap: 1px; padding: 0 3px; }
.tool.tf { color: #555; font: 7px/12px "Liberation Sans", Arial, sans-serif; }
.tool.letter { font-size: 9px; font-weight: 700; }
.bar .chat { width: 14px; height: 13px; }
.sep { width: 4px; height: 16px; border-right: 1px solid #bbb; }
.grip { width: 7px; height: 15px; border-left: 1px solid #bbb; background: linear-gradient(#c4c4c4, #c4c4c4) 3px 0 / 2px 100% no-repeat; }
.second .grip { width: 5px; background-position: 2px 0; }
.main { display: flex; flex: 1; min-height: 0; border-top: 1px solid #9b9b9b; }
.navigator { display: flex; flex-direction: column; width: 180px; padding: 0 2px 2px 2px; border-right: 1px solid #a0a0a0; border-bottom: 1px solid #c4c4c4; }
.navhead { display: flex; align-items: center; height: 10px; background: linear-gradient(90deg, #bccfe1, #d9e4f1); font-size: 7px; line-height: 10px; padding: 0 2px 0 1px; }
.close { display: grid; place-items: center; width: 8px; height: 9px; }
.close svg { width: 7px; height: 7px; fill: none; stroke: #222; stroke-width: 1.7; }
.treebox { position: relative; flex: 1; min-height: 0; margin: 0 1px 0 0; background: #fff; }
.tree { position: absolute; inset: 0 12px 0 0; overflow: hidden; margin: 0; padding: 1px 0 0 3px; list-style: none; }
.tree li { display: flex; align-items: center; height: 12px; }
.tree li.space { margin-top: 1px; }
.tree .ic { margin: 0 4px 0 1px; }
.cell { position: relative; flex: none; width: 14px; height: 12px; }
.line::before, .tee::before { content: ""; position: absolute; left: 7px; top: 0; bottom: 0; border-left: 1px dotted #aaa; }
.tee::after { content: ""; position: absolute; left: 8px; right: 0; top: 6px; border-top: 1px dotted #aaa; }
.tee.last::before { bottom: 5px; }
.tee.first::before { top: 6px; }
.cell b { position: absolute; z-index: 1; left: 4px; top: 3px; width: 7px; height: 7px; border: 1px solid #a9b2bb; background: linear-gradient(#3c5a90, #3c5a90) center / 3px 1px no-repeat #fff; }
.cell b.plus { background: linear-gradient(#3c5a90, #3c5a90) center / 3px 1px no-repeat, linear-gradient(#3c5a90, #3c5a90) center / 1px 3px no-repeat #fff; }
.scroll { position: absolute; inset: 0 1px 0 auto; display: flex; flex-direction: column; width: 10px; background: #f0f0f0; }
.scroll button { height: 12px; display: grid; place-items: center; }
.scroll svg { width: 9px; height: 9px; fill: none; stroke: #444; stroke-width: 1.4; }
.thumb { flex: 5; background: #cdcdcd; }
.thumb + button { margin-top: 68px; }
.tabs { display: flex; border-top: 1px solid #555; height: 14px; color: #808080; }
.tab { position: relative; padding: 0 7px 1px; line-height: 12px; }
.tab:not(.sel)::after { content: ""; position: absolute; right: 0; top: 3px; height: 8px; border-right: 1px solid #999; }
.tab.sel { margin-top: -1px; background: #fff; color: #111; border: 1px solid #555; border-top: 0; }
.navtabs { margin-left: 2px; }
.navtabs .tab { padding: 0 6px 1px; }
.work { display: flex; flex: 1; flex-direction: column; min-width: 0; }
.chart { display: flex; flex: 1; flex-direction: column; min-height: 0; margin-right: 1px; border-top: 1px solid #444; border-left: 1px solid #777; background: #000; color: #fff; font: 6px/9px "DejaVu Sans Condensed", "DejaVu Sans", sans-serif; }
.upper { display: flex; flex: 1; min-height: 0; }
.plots { display: flex; flex: 1; flex-direction: column; min-width: 0; border-bottom: 1px solid #999; }
.pane { position: relative; }
.pane svg { position: absolute; inset: 0; width: 100%; height: 100%; }
.pane svg * { vector-effect: non-scaling-stroke; }
.price { height: 16px; }
.equity { flex: 1; }
.splitter { height: 3px; background: linear-gradient(#777, #c6c6c6); }
.grid { stroke: #5f6d7a; stroke-dasharray: 2 2; fill: none; shape-rendering: crispEdges; }
.edge { stroke: #666; }
.bid { stroke: #56626e; }
.green { stroke: #00e400; stroke-width: 1.6; fill: none; }
.blue { stroke: #3a6f9f; fill: none; }
.red { stroke: #b03200; fill: none; }
.cap { position: absolute; left: 3px; top: 1px; }
.axis { display: flex; flex-direction: column; width: 28px; padding-top: 1px; border-left: 1px solid #aaa; overflow: hidden; }
.axis span { padding-left: 1px; }
.axis .bidlabel { margin: 0 2px 0 1px; padding-left: 1px; background: #fff; color: #222; }
.times { display: flex; height: 14px; padding-right: 28px; line-height: 14px; }
.times span { flex: 0 0 3.98%; width: 0; overflow: visible; background: linear-gradient(#aaa, #aaa) 0 0 / 1px 2px no-repeat; }
.charttabs { margin-top: 2px; padding-left: 2px; }
.arrow { display: grid; place-items: center; width: 12px; }
.arrow svg { width: 6px; height: 6px; fill: #999; }
.terminal { display: flex; height: 134px; padding: 1px 3px 4px 0; border-top: 1px solid #f8f8f8; }
.strip { display: flex; flex-direction: column; width: 11px; }
.side { flex: 1; display: flex; align-items: flex-end; margin: 2px 1px 0; background: linear-gradient(#dbe6f3, #b9cce0); }
.side span { writing-mode: vertical-rl; transform: rotate(180deg); font-size: 7px; line-height: 9px; }
.termbody { display: flex; flex: 1; min-width: 0; flex-direction: column; border-top: 1px solid #bbb; }
table { width: 100%; table-layout: fixed; border-collapse: collapse; background: #fff; }
th, td { padding: 0 3px 0 0; border-right: 1px solid #e5e5e5; text-align: right; font-weight: 400; height: 16px; }
td { padding-right: 1px; height: 13px; line-height: 12px; }
th:first-child { text-align: left; padding-left: 4px; }
th:last-child, td:last-child { border-right: 0; }
th small { color: #999; }
.pos td { background: #0078d7; color: #dcecfa; border-color: #4d9fe2; }
.sum td { background: #c8c8c8; border: 0; color: #111; font-weight: 700; }
.sum td:last-child { padding-right: 16px; }
.cellrow { display: flex; align-items: center; gap: 3px; padding-left: 1px; }
.cellrow .ic { width: 10px; height: 10px; }
.cellrow.end { justify-content: flex-end; padding-right: 2px; }
.cellrow .close svg { stroke: #a8b8c4; }
.blank { flex: 1; background: #fff; }
.termtabs .tab { padding: 0 6px 1px; }
.termtabs em { font: 700 6px/6px "Liberation Sans", Arial, sans-serif; color: #e02020; vertical-align: -2px; margin-left: 2px; }
.status { display: flex; height: 15px; padding: 1px 0 0 1px; border-top: 1px solid #c8c8c8; }
.status > * { line-height: 13px; }
.status > :not(:first-child) { border-left: 1px solid #c0c0c0; height: 12px; padding-left: 3px; }
.s1 { width: 78px; }
.s2 { width: 68px; }
.s3 { width: 47px; }
.s4 { display: flex; align-items: center; gap: 2px; width: 86px; }
.s4 svg { width: 16px; height: 9px; }
.taskbar { display: flex; height: 27px; background: linear-gradient(90deg, #1f3740, #1e3441 50%, #1b2747 72%, #182343); color: #fff; }
.quick { display: grid; place-items: center; width: 32px; }
.quick svg { width: 11px; height: 11px; }
.quick.opera svg, .quick.whatsapp svg { width: 15px; height: 15px; }
.quick.whatsapp { width: 30px; }
.quick.whatsapp + .task { margin-left: 2px; }
.task { display: flex; align-items: center; gap: 3px; width: 64px; margin-right: 4px; padding-left: 2px; border-bottom: 2px solid #6cb1ea; text-align: left; overflow: hidden; }
.pic { display: grid; place-items: center; flex: none; width: 16px; }
.pic svg { width: 14px; height: 14px; }
.folder .pic svg { width: 13px; height: 13px; }
.alpari .pic svg { height: 11px; }
.pic small { font-size: 6px; line-height: 5px; font-weight: 700; color: #0a0f14; }
.task.active { background: #4a5963; }
.task.progress { background: linear-gradient(90deg, #2f7a4c 12px, #2a4350 12px); border-color: #3fd44a; }
.tray { display: flex; align-items: center; gap: 6px; padding-right: 17px; }
.tray svg { width: 11px; height: 11px; }
.tray .cloud { width: 16px; height: 16px; }
.temp { margin: 0 2px 0 2px; }
time { text-align: center; line-height: 11px; margin: 0 5px 0 0; }
</style>
